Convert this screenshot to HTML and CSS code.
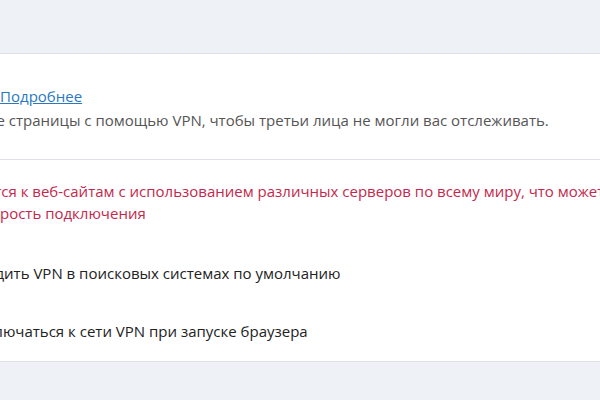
FILE: index.html
```html
<!DOCTYPE html>
<html lang="ru">
<head>
    <meta charset="UTF-8">
    <meta name="viewport" content="width=device-width, initial-scale=1.0">
    <title>VPN</title>
    <link rel="stylesheet" href="styles.css">
</head>
<body>
    <div class="top-bar"></div>

    <div class="card">
        <div class="section intro">
            <div class="title-line">Включить VPN <a href="#" class="more">Подробнее</a></div>
            <div class="desc">Безопасно просматривайте страницы с помощью VPN, чтобы третьи лица не могли вас отслеживать.</div>
        </div>

        <div class="section warning">
            <p>Opera подключается к веб-сайтам с использованием различных серверов по всему миру, что может снизить скорость подключения</p>
        </div>

        <div class="option bypass">Обходить VPN в поисковых системах по умолчанию</div>
        <div class="option autoconnect">Подключаться к сети VPN при запуске браузера</div>
    </div>

    <div class="bottom-bar"></div>
</body>
</html>
```

FILE: styles.css
```css
html, body {
    margin: 0;
    padding: 0;
}
body {
    font-family: "Open Sans", "Noto Sans", Arial, sans-serif;
    font-size: 15px;
    background-color: #eef1f5;
    color: #222;
    width: 600px;
    height: 400px;
    overflow: hidden;
}
.top-bar {
    height: 53px;
    border-bottom: 1px solid #dde1e7;
}
.card {
    background: white;
    border-bottom: 1px solid #dde1e7;
    overflow: hidden;
}
.section {
    white-space: nowrap;
}
.intro {
    padding: 30px 0 27px;
    line-height: 24px;
    border-bottom: 1px solid #dde1e7;
}
.title-line {
    margin-left: -110px;
    color: #222;
}
.more {
    color: #2a78c2;
}
.desc {
    margin-left: -198px;
    color: #555;
}
.warning {
    padding: 20px 0 20px;
    margin-left: -24px;
}
.warning p {
    margin: 0;
    width: 710px;
    white-space: normal;
    line-height: 22px;
    color: #c4284c;
    text-indent: -111px;
}
.option {
    height: 58px;
    line-height: 58px;
    white-space: nowrap;
    color: #222;
}
.bypass {
    margin-left: -42px;
}
.autoconnect {
    margin-left: -42px;
    height: 59px;
}
.bottom-bar {
    height: 40px;
}
```
